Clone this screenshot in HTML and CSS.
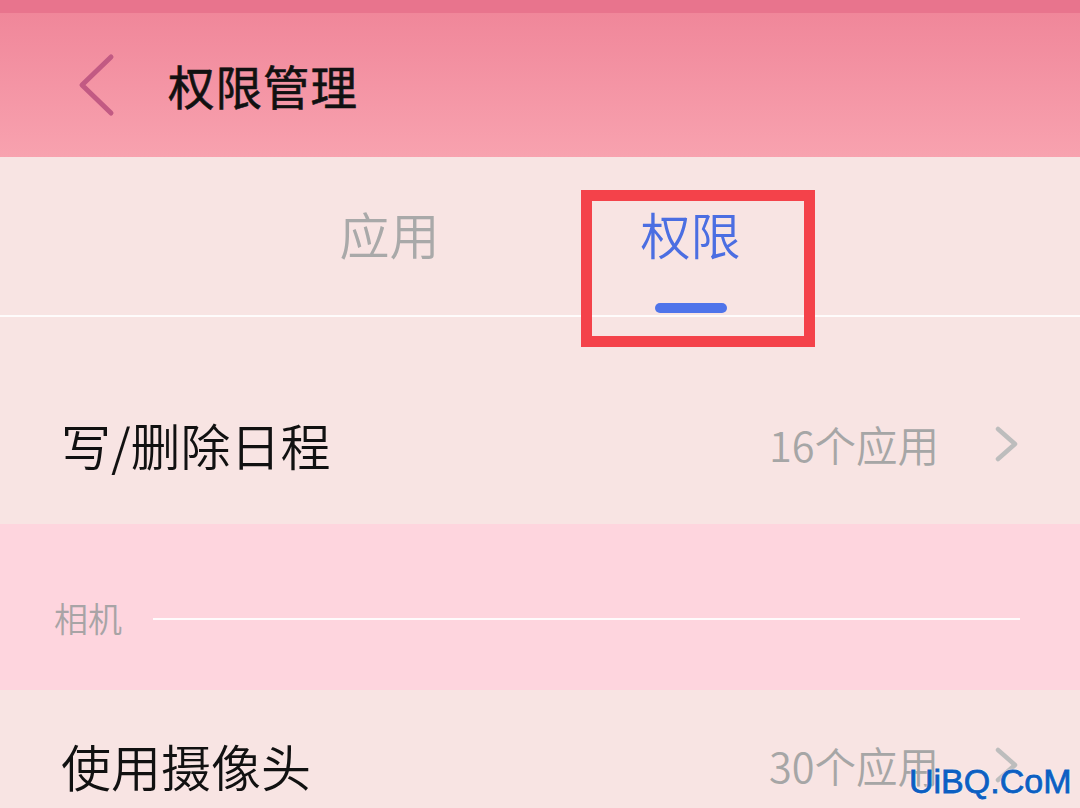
FILE: index.html
```html
<!DOCTYPE html>
<html lang="zh-CN">
<head>
<meta charset="utf-8">
<title>权限管理</title>
<link rel="stylesheet" href="styles.css">
</head>
<body>
<div class="screen">
  <div class="status"></div>
  <header class="header">
    <svg class="back" width="40" height="64" viewBox="0 0 40 64">
      <polyline points="33,4 4,32 33,60" fill="none" stroke="#c25a83" stroke-width="5" stroke-linecap="round" stroke-linejoin="round"/>
    </svg>
    <h1 class="title">权限管理</h1>
  </header>
  <nav class="tabs">
    <div class="tab">
      <span class="tab-label">应用</span>
      <span class="tab-bar tab-bar-hidden"></span>
    </div>
    <div class="tab tab-active">
      <span class="tab-label">权限</span>
      <span class="tab-bar"></span>
    </div>
  </nav>
  <div class="divider"></div>
  <div class="row row-first">
    <span class="row-label">写/删除日程</span>
    <span class="row-value">16个应用</span>
    <svg class="chev" width="26" height="36" viewBox="0 0 26 36">
      <polyline points="4,3 21,18 4,33" fill="none" stroke="#bdbdbd" stroke-width="4.5" stroke-linecap="round" stroke-linejoin="round"/>
    </svg>
  </div>
  <div class="section">
    <span class="section-label">相机</span>
    <span class="section-line"></span>
  </div>
  <div class="row row-second">
    <span class="row-label">使用摄像头</span>
    <span class="row-value">30个应用</span>
    <svg class="chev" width="26" height="36" viewBox="0 0 26 36">
      <polyline points="4,3 21,18 4,33" fill="none" stroke="#bdbdbd" stroke-width="4.5" stroke-linecap="round" stroke-linejoin="round"/>
    </svg>
  </div>
  <div class="highlight"></div>
  <div class="watermark">UiBQ.CoM</div>
</div>
</body>
</html>
```

FILE: styles.css
```css
* { box-sizing: border-box; }
html, body {
  margin: 0;
  padding: 0;
  background: #f8e4e3;
}
body {
  font-family: "Noto Sans CJK SC", "Noto Sans", sans-serif;
}
.screen {
  position: relative;
  width: 1080px;
  height: 808px;
  overflow: hidden;
  display: flex;
  flex-direction: column;
  background: #f8e4e3;
}
.status {
  height: 13px;
  flex: none;
  background: #e8748d;
}
.header {
  height: 144px;
  flex: none;
  display: flex;
  align-items: center;
  padding-left: 78px;
  background: linear-gradient(to bottom, #f0879a, #f8a2af);
}
.back {
  display: block;
  flex: none;
}
.title {
  margin: 0 0 0 50px;
  font-size: 46.5px;
  line-height: 46px;
  font-weight: 400;
  color: #111;
  letter-spacing: 1px;
  -webkit-text-stroke: 0.6px #111;
}
.tabs {
  height: 158px;
  flex: none;
  display: flex;
  justify-content: center;
}
.tab {
  width: 301px;
  display: flex;
  flex-direction: column;
  align-items: center;
  padding-top: 51px;
}
.tab-label {
  font-size: 50px;
  line-height: 50px;
  font-weight: 350;
  color: #a9a9a9;
}
.tab-active .tab-label {
  color: #4b6ee2;
}
.tab-bar {
  margin-top: 45px;
  width: 72px;
  height: 10px;
  border-radius: 5px;
  background: #4f74ea;
}
.tab-bar-hidden {
  visibility: hidden;
}
.divider {
  height: 2px;
  flex: none;
  background: #ffffff;
  opacity: 0.85;
}
.row {
  flex: none;
  display: flex;
  align-items: center;
  padding-left: 61px;
  padding-right: 60px;
}
.row-first {
  height: 207px;
  padding-top: 46px;
}
.row-second {
  height: 158px;
  padding-bottom: 8px;
}
.row-label {
  flex: 1;
  font-size: 50px;
  line-height: 50px;
  font-weight: 350;
  color: #111;
}
.row-value {
  font-size: 41.5px;
  line-height: 42px;
  font-weight: 350;
  color: #a6a6a6;
}
.chev {
  display: block;
  margin-left: 55px;
  flex: none;
}
.section {
  height: 166px;
  flex: none;
  display: flex;
  align-items: center;
  padding: 28px 60px 0 54px;
  background: #fed5de;
}
.section-label {
  font-size: 34px;
  line-height: 34px;
  font-weight: 350;
  color: #a8a4a6;
  position: relative;
  top: -3px;
}
.section-line {
  flex: 1;
  height: 2px;
  margin-left: 31px;
  margin-top: -4px;
  background: #ffffff;
  opacity: 0.9;
}
.highlight {
  position: absolute;
  left: 581px;
  top: 190px;
  width: 234px;
  height: 157px;
  border: 11px solid #f4424a;
}
.watermark {
  position: absolute;
  left: 909px;
  top: 764px;
  font-family: "Liberation Sans", Arial, sans-serif;
  font-size: 34px;
  line-height: 34px;
  color: #0c5fc2;
  -webkit-text-stroke: 0.8px #0c5fc2;
  text-shadow: 0 0 2px #fff, 0 0 2px #fff;
}
```
